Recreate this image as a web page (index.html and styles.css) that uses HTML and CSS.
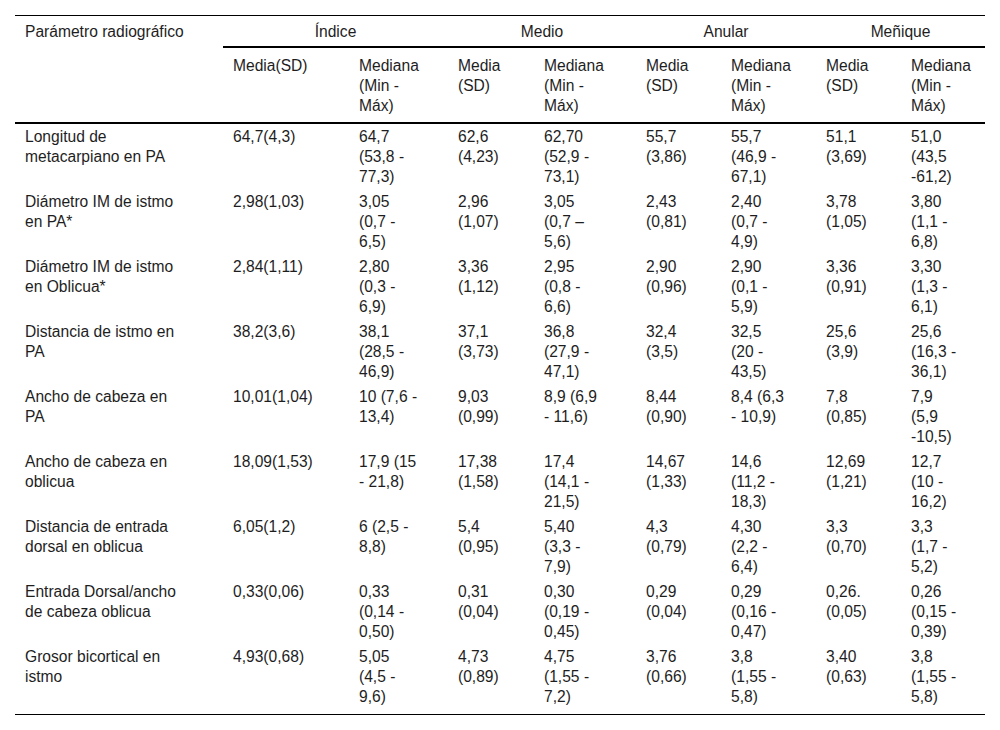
FILE: index.html
```html
<!DOCTYPE html>
<html lang="es">
<head>
<meta charset="utf-8">
<title>Parámetros radiográficos</title>
<link rel="stylesheet" href="styles.css">
</head>
<body>
<table class="data">
  <colgroup>
    <col class="c-param">
    <col class="c-1">
    <col class="c-2">
    <col class="c-3">
    <col class="c-4">
    <col class="c-5">
    <col class="c-6">
    <col class="c-7">
    <col class="c-8">
  </colgroup>
  <thead>
    <tr class="groups">
      <th rowspan="2" class="param">Parámetro radiográfico</th>
      <th colspan="2" class="grp">Índice</th>
      <th colspan="2" class="grp">Medio</th>
      <th colspan="2" class="grp">Anular</th>
      <th colspan="2" class="grp">Meñique</th>
    </tr>
    <tr class="subs">
      <th>Media(SD)</th>
      <th>Mediana<br>(Min -<br>Máx)</th>
      <th>Media<br>(SD)</th>
      <th>Mediana<br>(Min -<br>Máx)</th>
      <th>Media<br>(SD)</th>
      <th>Mediana<br>(Min -<br>Máx)</th>
      <th>Media<br>(SD)</th>
      <th>Mediana<br>(Min -<br>Máx)</th>
    </tr>
  </thead>
  <tbody>
    <tr>
      <td>Longitud de<br>metacarpiano en PA</td>
      <td>64,7(4,3)</td>
      <td>64,7<br>(53,8 -<br>77,3)</td>
      <td>62,6<br>(4,23)</td>
      <td>62,70<br>(52,9 -<br>73,1)</td>
      <td>55,7<br>(3,86)</td>
      <td>55,7<br>(46,9 -<br>67,1)</td>
      <td>51,1<br>(3,69)</td>
      <td>51,0<br>(43,5<br>-61,2)</td>
    </tr>
    <tr>
      <td>Diámetro IM de istmo<br>en PA*</td>
      <td>2,98(1,03)</td>
      <td>3,05<br>(0,7 -<br>6,5)</td>
      <td>2,96<br>(1,07)</td>
      <td>3,05<br>(0,7 –<br>5,6)</td>
      <td>2,43<br>(0,81)</td>
      <td>2,40<br>(0,7 -<br>4,9)</td>
      <td>3,78<br>(1,05)</td>
      <td>3,80<br>(1,1 -<br>6,8)</td>
    </tr>
    <tr>
      <td>Diámetro IM de istmo<br>en Oblicua*</td>
      <td>2,84(1,11)</td>
      <td>2,80<br>(0,3 -<br>6,9)</td>
      <td>3,36<br>(1,12)</td>
      <td>2,95<br>(0,8 -<br>6,6)</td>
      <td>2,90<br>(0,96)</td>
      <td>2,90<br>(0,1 -<br>5,9)</td>
      <td>3,36<br>(0,91)</td>
      <td>3,30<br>(1,3 -<br>6,1)</td>
    </tr>
    <tr>
      <td>Distancia de istmo en<br>PA</td>
      <td>38,2(3,6)</td>
      <td>38,1<br>(28,5 -<br>46,9)</td>
      <td>37,1<br>(3,73)</td>
      <td>36,8<br>(27,9 -<br>47,1)</td>
      <td>32,4<br>(3,5)</td>
      <td>32,5<br>(20 -<br>43,5)</td>
      <td>25,6<br>(3,9)</td>
      <td>25,6<br>(16,3 -<br>36,1)</td>
    </tr>
    <tr>
      <td>Ancho de cabeza en<br>PA</td>
      <td>10,01(1,04)</td>
      <td>10 (7,6 -<br>13,4)</td>
      <td>9,03<br>(0,99)</td>
      <td>8,9 (6,9<br>- 11,6)</td>
      <td>8,44<br>(0,90)</td>
      <td>8,4 (6,3<br>- 10,9)</td>
      <td>7,8<br>(0,85)</td>
      <td>7,9<br>(5,9<br>-10,5)</td>
    </tr>
    <tr>
      <td>Ancho de cabeza en<br>oblicua</td>
      <td>18,09(1,53)</td>
      <td>17,9 (15<br>- 21,8)</td>
      <td>17,38<br>(1,58)</td>
      <td>17,4<br>(14,1 -<br>21,5)</td>
      <td>14,67<br>(1,33)</td>
      <td>14,6<br>(11,2 -<br>18,3)</td>
      <td>12,69<br>(1,21)</td>
      <td>12,7<br>(10 -<br>16,2)</td>
    </tr>
    <tr>
      <td>Distancia de entrada<br>dorsal en oblicua</td>
      <td>6,05(1,2)</td>
      <td>6 (2,5 -<br>8,8)</td>
      <td>5,4<br>(0,95)</td>
      <td>5,40<br>(3,3 -<br>7,9)</td>
      <td>4,3<br>(0,79)</td>
      <td>4,30<br>(2,2 -<br>6,4)</td>
      <td>3,3<br>(0,70)</td>
      <td>3,3<br>(1,7 -<br>5,2)</td>
    </tr>
    <tr>
      <td>Entrada Dorsal/ancho<br>de cabeza oblicua</td>
      <td>0,33(0,06)</td>
      <td>0,33<br>(0,14 -<br>0,50)</td>
      <td>0,31<br>(0,04)</td>
      <td>0,30<br>(0,19 -<br>0,45)</td>
      <td>0,29<br>(0,04)</td>
      <td>0,29<br>(0,16 -<br>0,47)</td>
      <td>0,26.<br>(0,05)</td>
      <td>0,26<br>(0,15 -<br>0,39)</td>
    </tr>
    <tr>
      <td>Grosor bicortical en<br>istmo</td>
      <td>4,93(0,68)</td>
      <td>5,05<br>(4,5 -<br>9,6)</td>
      <td>4,73<br>(0,89)</td>
      <td>4,75<br>(1,55 -<br>7,2)</td>
      <td>3,76<br>(0,66)</td>
      <td>3,8<br>(1,55 -<br>5,8)</td>
      <td>3,40<br>(0,63)</td>
      <td>3,8<br>(1,55 -<br>5,8)</td>
    </tr>
  </tbody>
</table>
</body>
</html>
```

FILE: styles.css
```css
html, body {
  background: #ffffff;
}

body {
  margin: 15px 15px;
  font-family: "Liberation Sans", Arial, sans-serif;
  font-size: 15.6px;
  line-height: 20px;
  color: #1e1e1e;
}

.data {
  width: 970px;
  table-layout: fixed;
  border-collapse: separate;
  border-spacing: 0;
}

.c-param { width: 208px; }
.c-1 { width: 126px; }
.c-2 { width: 99px; }
.c-3 { width: 86px; }
.c-4 { width: 102px; }
.c-5 { width: 85px; }
.c-6 { width: 95px; }
.c-7 { width: 85px; }
.c-8 { width: 84px; }

.data th,
.data td {
  font-weight: normal;
  text-align: left;
  vertical-align: top;
  padding: 0 10px;
  white-space: nowrap;
}

.groups th {
  border-top: 1px solid #000000;
  padding-top: 6px;
  padding-bottom: 4px;
}

.groups .grp {
  text-align: center;
  border-bottom: 2px solid #000000;
}

.groups .param {
  border-bottom: 2px solid #000000;
}

.subs th {
  padding-top: 8px;
  padding-bottom: 6px;
  border-bottom: 2px solid #000000;
}

.data tbody td {
  padding-top: 3px;
  padding-bottom: 2px;
}

.data tbody tr:last-child td {
  padding-bottom: 7px;
  border-bottom: 1px solid #000000;
}
```
